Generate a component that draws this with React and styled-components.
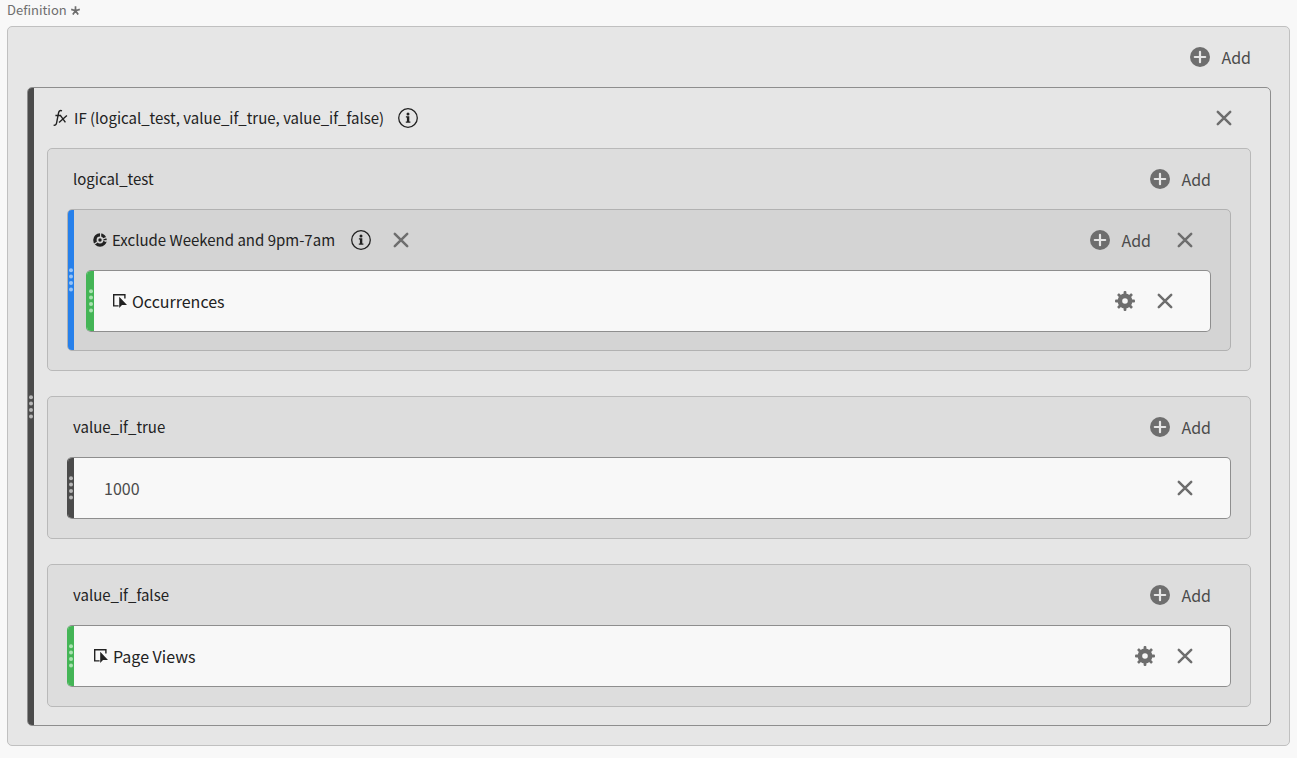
import React, {useState} from 'react';
import styled, {createGlobalStyle} from "styled-components";

const GlobalStyle = createGlobalStyle`
  * {
    box-sizing: border-box;
  }
  body {
    margin: 0;
    background-color: #f8f8f8;
    color: #222222;
    font-family: "Noto Sans CJK SC", "Noto Sans", sans-serif;
    font-size: 16px;
    line-height: 20px;
  }
`;

const Page = styled.main`
  padding: 0 7px 12px;
`;

const FieldLabel = styled.div`
  display: flex;
  align-items: center;
  gap: 4px;
  height: 26px;
  padding-bottom: 6px;
  color: #6e6e6e;
  font-size: 13px;
`;

const Panel = styled.section`
  padding: 0 18px 19px 19px;
  border: 1px solid #c0c0c0;
  border-radius: 5px;
  background-color: #e6e6e6;
`;

const Block = styled.div`
  display: flex;
  border: 1px solid ${(props) => props.$line || '#8e8e8e'};
  border-left-color: ${(props) => props.$edge};
  border-radius: 5px;
  background-color: ${(props) => props.$fill};
  overflow: hidden;
`;

const BlockBody = styled.div`
  flex: 1;
  min-width: 0;
`;

const Nested = styled.div`
  display: flex;
  flex-direction: column;
  gap: 25px;
  padding: 0 19px 18px ${(props) => props.$left}px;
`;

const Group = styled.section`
  padding: 0 19px 19px;
  border: 1px solid #b9b9b9;
  border-radius: 5px;
  background-color: #dddddd;
`;

const Header = styled.header`
  display: flex;
  align-items: center;
  justify-content: space-between;
  height: 60px;
  padding: 0 ${(props) => props.$right || 0}px 0 ${(props) => props.$left || 0}px;
`;

const Side = styled.div`
  display: flex;
  align-items: center;
  gap: ${(props) => props.$gap}px;
`;

const Name = styled.span`
  display: flex;
  align-items: center;
  gap: 5px;
  white-space: nowrap;
`;

const HeaderName = styled(Name)`
  font-size: 15px;
`;

const GripBar = styled.div`
  flex: none;
  display: flex;
  align-items: center;
  justify-content: flex-end;
  width: ${(props) => props.$width}px;
  padding-right: 1px;
  background-color: ${(props) => props.$color};
  color: ${(props) => props.$dots};
  cursor: grab;
`;

const IconButton = styled.button`
  display: flex;
  align-items: center;
  gap: 11px;
  height: 20px;
  padding: 0;
  border: 0;
  background: none;
  color: #6e6e6e;
  font: inherit;
  cursor: pointer;
`;

const AddText = styled.span`
  color: #4b4b4b;
`;

const NumberInput = styled.input`
  width: 200px;
  padding: 0;
  border: 0;
  outline: none;
  background: none;
  color: #4b4b4b;
  font: inherit;
`;

const Asterisk = () => (
    <svg width="9" height="9" viewBox="0 0 9 9" stroke="currentColor" strokeWidth="1.7" aria-hidden="true">
        <path d="M4.5 4.8V0.2M4.5 4.8L0.2 3.4M4.5 4.8L8.8 3.4M4.5 4.8L1.8 8.6M4.5 4.8L7.2 8.6" />
    </svg>
);

const PlusCircle = () => (
    <svg width="20" height="20" viewBox="0 0 20 20" aria-hidden="true">
        <circle cx="10" cy="10" r="10" fill="currentColor" />
        <path d="M10 4.8V15.2M4.8 10H15.2" stroke="#e6e6e6" strokeWidth="2.2" strokeLinecap="round" />
    </svg>
);

const Cross = () => (
    <svg width="20" height="20" viewBox="0 0 20 20" aria-hidden="true">
        <path d="M3.8 3.8L16.2 16.2M16.2 3.8L3.8 16.2" stroke="currentColor" strokeWidth="2.5" strokeLinecap="round" />
    </svg>
);

const Gear = () => (
    <svg width="20" height="20" viewBox="0 0 20 20" aria-hidden="true">
        <circle cx="10" cy="10" r="5.1" fill="none" stroke="currentColor" strokeWidth="4.6" />
        {[0, 45, 90, 135, 180, 225, 270, 315].map((deg) => (
            <rect key={deg} x="8.6" y="0" width="2.8" height="4.5" rx="1" fill="currentColor" transform={`rotate(${deg} 10 10)`} />
        ))}
    </svg>
);

const Info = () => (
    <svg width="20" height="20" viewBox="0 0 20 20" aria-hidden="true">
        <circle cx="10" cy="10" r="9.3" fill="none" stroke="#222222" strokeWidth="1.3" />
        <circle cx="10" cy="6" r="1.5" fill="#222222" />
        <path d="M7.9 8.3H11.3V13.5H12.4V14.8H7.8V13.5H8.9V9.6H7.9Z" fill="#222222" />
    </svg>
);

const Fx = () => (
    <svg width="16" height="18" viewBox="0 0 16 18" fill="none" stroke="#222222" strokeWidth="1.4" aria-hidden="true">
        <path d="M9 1.8C6.9 1 5.9 2 5.5 4.2L3.6 13.8C3.2 15.6 2.4 16.6 0.6 16.1M2.4 6.5H8" />
        <path d="M7.4 6.4L12.4 13.4M13.9 6.4L6 13.4" />
    </svg>
);

const Segment = () => (
    <svg width="14" height="14" viewBox="0 0 14 14" aria-hidden="true">
        <circle cx="7" cy="7" r="5.1" fill="none" stroke="#222222" strokeWidth="3.4" />
        <path d="M7.6 0V4.2M14 4.4L9.8 6M1.2 11.2L4.4 9" stroke="#d4d4d4" strokeWidth="1.2" />
        <path d="M14 7L9.6 7.4L13.4 9.2Z" fill="#d4d4d4" />
        <circle cx="7" cy="7" r="1.7" fill="#222222" />
    </svg>
);

const Metric = () => (
    <svg width="14" height="14" viewBox="0 0 14 14" aria-hidden="true">
        <path d="M5.6 11.9H0.7V0.7H11.9V4.4" fill="none" stroke="#222222" strokeWidth="1.4" />
        <path d="M6.2 2.8V13.9L9 10.9H14Z" fill="#222222" />
    </svg>
);

function Grip({color, dots, width = 6}) {
    return (
        <GripBar $color={color} $dots={dots} $width={width}>
            <svg width="4" height="24" viewBox="0 0 4 24" fill="currentColor" aria-hidden="true">
                {[0, 1, 2, 3].map((i) => <circle key={i} cx="2" cy={2.2 + i * 6.4} r="2" />)}
            </svg>
        </GripBar>
    );
}

function Add() {
    return (
        <IconButton type="button">
            <PlusCircle />
            <AddText>Add</AddText>
        </IconButton>
    );
}

function Remove({name}) {
    return (
        <IconButton type="button" aria-label={`Remove ${name}`}>
            <Cross />
        </IconButton>
    );
}

function MetricCard({name, grip, indent}) {
    return (
        <Block $fill="#f8f8f8" $edge="#44b556">
            <Grip color="#44b556" dots="#a9e3b1" width={grip} />
            <BlockBody>
                <Header $left={indent} $right={35}>
                    <Name><Metric />{name}</Name>
                    <Side $gap={20}>
                        <IconButton type="button" aria-label={`${name} settings`}><Gear /></IconButton>
                        <Remove name={name} />
                    </Side>
                </Header>
            </BlockBody>
        </Block>
    );
}

function ValueCard() {
    const [value, setValue] = useState('1000');

    return (
        <Block $fill="#f8f8f8" $edge="#4b4b4b">
            <Grip color="#4b4b4b" dots="#b8b8b8" />
            <BlockBody>
                <Header $left={30} $right={35}>
                    <NumberInput aria-label="Static number" value={value} onChange={(e) => setValue(e.target.value)} />
                    <Remove name="static number" />
                </Header>
            </BlockBody>
        </Block>
    );
}

function Argument({name, children}) {
    return (
        <Group>
            <Header $left={6} $right={20}>
                <HeaderName>{name}</HeaderName>
                <Add />
            </Header>
            {children}
        </Group>
    );
}

function App() {
    return (
        <>
            <GlobalStyle />
            <Page>
                <FieldLabel>Definition <Asterisk /></FieldLabel>
                <Panel>
                    <Header $right={20}>
                        <span />
                        <Add />
                    </Header>
                    <Block $fill="#e6e6e6" $edge="#8e8e8e">
                        <Grip color="#4b4b4b" dots="#b8b8b8" />
                        <BlockBody>
                            <Header $left={19} $right={36}>
                                <Side $gap={14}>
                                    <HeaderName><Fx />IF (logical_test, value_if_true, value_if_false)</HeaderName>
                                    <IconButton type="button" aria-label="About IF"><Info /></IconButton>
                                </Side>
                                <Remove name="IF" />
                            </Header>
                            <Nested $left={13}>
                                <Argument name="logical_test">
                                    <Block $fill="#d4d4d4" $line="#b1b1b1" $edge="#b1b1b1">
                                        <Grip color="#2680eb" dots="#96c3f8" />
                                        <BlockBody>
                                            <Header $left={19} $right={35}>
                                                <Side $gap={20}>
                                                    <Side $gap={16}>
                                                        <HeaderName><Segment />Exclude Weekend and 9pm-7am</HeaderName>
                                                        <IconButton type="button" aria-label="About segment"><Info /></IconButton>
                                                    </Side>
                                                    <Remove name="segment" />
                                                </Side>
                                                <Side $gap={24}>
                                                    <Add />
                                                    <Remove name="container" />
                                                </Side>
                                            </Header>
                                            <Nested $left={12}>
                                                <MetricCard name="Occurrences" grip={7} indent={19} />
                                            </Nested>
                                        </BlockBody>
                                    </Block>
                                </Argument>
                                <Argument name="value_if_true">
                                    <ValueCard />
                                </Argument>
                                <Argument name="value_if_false">
                                    <MetricCard name="Page Views" grip={6} indent={20} />
                                </Argument>
                            </Nested>
                        </BlockBody>
                    </Block>
                </Panel>
            </Page>
        </>
    );
}

export default App;
